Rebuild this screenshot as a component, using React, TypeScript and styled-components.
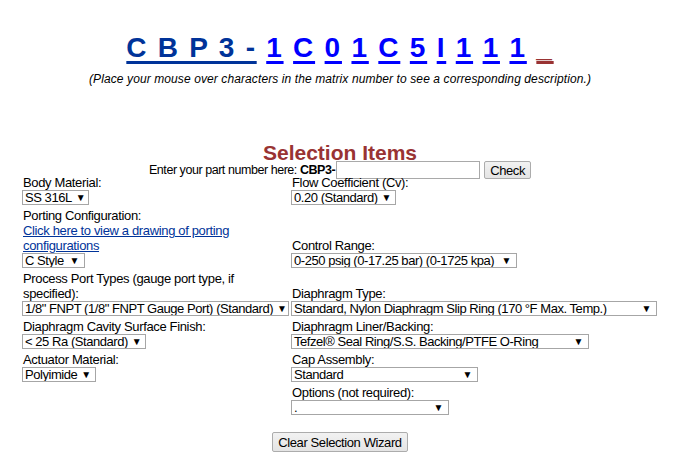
import { Fragment } from 'react'
import styled, { createGlobalStyle } from 'styled-components'

const GlobalStyle = createGlobalStyle`
  body {
    margin: 0;
    background: #fff;
    font-family: 'Liberation Sans', Arial, sans-serif;
    font-size: 13px;
    letter-spacing: -0.35px;
    color: #000;
  }
`

const Page = styled.div`
  width: 680px;
  padding: 32px 0 0 0;
`

const Matrix = styled.div`
  text-align: center;
  font-size: 28px;
  font-weight: bold;
  line-height: 32px;
  letter-spacing: 1.75px;
  white-space: pre;
`

const Lead = styled.a`
  color: #003399;
  text-decoration: underline;
  text-decoration-thickness: 3px;
  text-underline-offset: 4px;
`

const Code = styled(Lead)`
  color: #0000ff;
`

const Blank = styled.span`
  color: #993333;
  text-decoration: underline;
  text-decoration-thickness: 3px;
  text-underline-offset: 4px;
`

const Hint = styled.p`
  margin: 8px 0 0 0;
  text-align: center;
  font-size: 12px;
  line-height: 14px;
  letter-spacing: 0.1px;
  font-style: italic;
`

const Title = styled.h2`
  margin: 56px 0 0 0;
  text-align: center;
  font-size: 21px;
  line-height: 21px;
  letter-spacing: 0;
  font-weight: bold;
  color: #993333;
`

const PartRow = styled.div`
  display: flex;
  justify-content: center;
  align-items: center;
  height: 10px;
  margin-top: 2px;
  font-size: 12.5px;
  letter-spacing: -0.45px;
  white-space: nowrap;
`

const PartInput = styled.input`
  box-sizing: border-box;
  width: 144px;
  height: 18px;
  margin: 0 4px 0 1px;
  padding: 0 2px;
  border: 1px solid #a9a9a9;
  font: 13px 'Liberation Sans', Arial, sans-serif;
`

const Button = styled.button<{ $h: number }>`
  box-sizing: border-box;
  height: ${(p) => p.$h}px;
  padding: 0 5px;
  border: 1px solid #acacac;
  border-radius: 2px;
  background: linear-gradient(#f2f2f2, #e4e4e4);
  font: 13px 'Liberation Sans', Arial, sans-serif;
  letter-spacing: -0.4px;
  color: #000;
`

const Grid = styled.div`
  display: grid;
  grid-template-columns: 267px auto;
  column-gap: 2px;
  row-gap: 3px;
  align-items: end;
  padding-left: 22px;
`

const Cell = styled.div`
  display: flex;
  flex-direction: column;
  align-items: flex-start;
`

const Label = styled.div`
  padding-left: 1px;
  line-height: 15px;
`

const Link = styled.a`
  padding-left: 1px;
  line-height: 15px;
  color: #003399;
  text-decoration: underline;
`

const SelectBox = styled.div<{ $w: number }>`
  box-sizing: border-box;
  display: flex;
  justify-content: space-between;
  align-items: center;
  width: ${(p) => p.$w}px;
  height: 15px;
  padding: 0 5px 0 2px;
  border: 1px solid #a6a6a6;
  background: #fff;
  line-height: 13px;
  letter-spacing: -0.45px;
  white-space: nowrap;
  overflow: hidden;
`

const Arrow = styled.span`
  font-size: 10px;
  line-height: 10px;
  margin-left: 4px;
`

const Footer = styled.div`
  display: flex;
  justify-content: center;
  margin-top: 17px;
`

const Select = ({ value, width }: { value: string; width: number }) => (
  <SelectBox $w={width}>
    <span>{value}</span>
    <Arrow>▼</Arrow>
  </SelectBox>
)

const Field = ({ label, value, width }: { label: string; value: string; width: number }) => (
  <Cell>
    <Label>{label}</Label>
    <Select value={value} width={width} />
  </Cell>
)

const codes = ['1', 'C', '0', '1', 'C', '5', 'I', '1', '1', '1']

export default function App() {
  return (
    <Page>
      <GlobalStyle />
      <Matrix>
        <Lead>C B P 3 -</Lead>
        {codes.map((c, i) => (
          <Fragment key={i}>
            {' '}
            <Code>{c}</Code>
          </Fragment>
        ))}
        {' '}
        <Blank>_</Blank>
      </Matrix>
      <Hint>(Place your mouse over characters in the matrix number to see a corresponding description.)</Hint>

      <Title>Selection Items</Title>
      <PartRow>
        Enter your part number here:&nbsp;<b>CBP3-</b>
        <PartInput />
        <Button $h={18}>Check</Button>
      </PartRow>

      <Grid>
        <Field label="Body Material:" value="SS 316L" width={67} />
        <Field label="Flow Coefficient (Cv):" value="0.20 (Standard)" width={105} />

        <Cell>
          <Label>Porting Configuration:</Label>
          <Link>Click here to view a drawing of porting configurations</Link>
          <Select value="C Style" width={63} />
        </Cell>
        <Field label="Control Range:" value="0-250 psig (0-17.25 bar) (0-1725 kpa)" width={226} />

        <Field
          label="Process Port Types (gauge port type, if specified):"
          value={'1/8" FNPT (1/8" FNPT Gauge Port) (Standard)'}
          width={267}
        />
        <Field label="Diaphragm Type:" value="Standard, Nylon Diaphragm Slip Ring (170 °F Max. Temp.)" width={366} />

        <Field label="Diaphragm Cavity Surface Finish:" value="< 25 Ra (Standard)" width={124} />
        <Field label="Diaphragm Liner/Backing:" value="Tefzel® Seal Ring/S.S. Backing/PTFE O-Ring" width={298} />

        <Field label="Actuator Material:" value="Polyimide" width={74} />
        <Field label="Cap Assembly:" value="Standard" width={187} />

        <Cell />
        <Field label="Options (not required):" value="." width={158} />
      </Grid>

      <Footer>
        <Button $h={20}>Clear Selection Wizard</Button>
      </Footer>
    </Page>
  )
}
